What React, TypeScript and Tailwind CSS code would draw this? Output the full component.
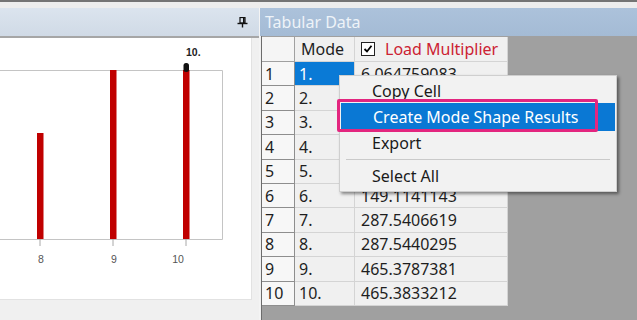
import React from "react";

const rows: [string, string, string][] = [
  ["1", "1.", "6.064759083"],
  ["2", "2.", ""],
  ["3", "3.", ""],
  ["4", "4.", ""],
  ["5", "5.", ""],
  ["6", "6.", "149.1141143"],
  ["7", "7.", "287.5406619"],
  ["8", "8.", "287.5440295"],
  ["9", "9.", "465.3787381"],
  ["10", "10.", "465.3833212"],
];

function Chart() {
  return (
    <svg width="252" height="262" viewBox="0 0 252 262" className="block">
      <path d="M0 32.5 H222.5 V201.5 H0" fill="none" stroke="#c4c4c4" strokeWidth="1" />
      {[40, 113, 186].map((x) => (
        <line key={x} x1={x} y1={201} x2={x} y2={208} stroke="#a8a8a8" strokeWidth="1" />
      ))}
      <rect x="37" y="95" width="6.5" height="106" fill="#c00000" />
      <rect x="110" y="32" width="6.5" height="169" fill="#c00000" />
      <rect x="183" y="32" width="6.5" height="169" fill="#c00000" />
      <rect x="183.5" y="25" width="5.5" height="9" rx="2.5" fill="#111" />
      <text x="186" y="18" fontFamily="Liberation Sans, Arial, sans-serif" fontSize="10.5" fontWeight="bold" fill="#222">10.</text>
      <text x="41" y="225" textAnchor="middle" fontFamily="Liberation Sans, Arial, sans-serif" fontSize="10.5" fill="#555">8</text>
      <text x="114" y="225" textAnchor="middle" fontFamily="Liberation Sans, Arial, sans-serif" fontSize="10.5" fill="#555">9</text>
      <text x="178" y="225" textAnchor="middle" fontFamily="Liberation Sans, Arial, sans-serif" fontSize="10.5" fill="#555">10</text>
    </svg>
  );
}

function Pin() {
  return (
    <svg width="11" height="11" viewBox="0 0 11 11" className="block">
      <rect x="3" y="0.5" width="5" height="5.5" fill="none" stroke="#111" strokeWidth="1.2" />
      <rect x="6" y="1" width="1.6" height="5" fill="#111" />
      <line x1="0.5" y1="6.5" x2="10.5" y2="6.5" stroke="#111" strokeWidth="1.4" />
      <line x1="5.5" y1="6.5" x2="5.5" y2="10.5" stroke="#111" strokeWidth="1.4" />
    </svg>
  );
}

export default function App() {
  return (
    <div
      className="relative w-[637px] h-[320px] overflow-hidden flex flex-col bg-[#f0f0f0]"
      style={{ fontFamily: '"Noto Sans", "Open Sans", sans-serif' }}
    >
      <div className="h-[2px] bg-[#747474]" />
      <div className="h-[6px] bg-[#ededed]" />
      <div className="flex flex-1 min-h-0">
        {/* left panel */}
        <div className="w-[259px] flex flex-col">
          <div className="h-[28px] bg-gradient-to-b from-[#dbe4ee] to-[#d0dae6] flex items-center justify-end pr-[11px]">
            <Pin />
          </div>
          <div className="h-[2px] bg-[#a6a6a6]" />
          <div className="flex flex-1">
            <div className="w-[252px] h-[262px] bg-white border-r border-b border-[#e2e2e2]">
              <Chart />
            </div>
          </div>
        </div>
        <div className="w-[1px] bg-[#f4f4f4]" />
        {/* right panel */}
        <div className="flex-1 flex flex-col">
          <div className="h-[28px] bg-gradient-to-b from-[#acc2db] to-[#a4bbd5] flex items-center pl-[5px] text-[16px] text-[#eef3f8]">
            Tabular Data
          </div>
          <div className="flex flex-1">
            <div className="w-[1px] bg-[#f0f0f0]" />
            <div className="flex-1 bg-[#a0a0a0] border-l border-[#6c6c6c] pt-[1px]">
              <div className="grid grid-cols-[33px_60px_153px] text-[16px] text-[#1e1e1e] leading-none">
                {/* header */}
                <div className="h-[25px] bg-[#f5f5f5] border-r border-b border-[#a0a0a0]" />
                <div className="h-[25px] bg-[#f0f0f0] border-r border-b border-[#d4d4d4] flex items-center pl-[6px]">
                  Mode
                </div>
                <div className="h-[25px] bg-[#f0f0f0] border-r border-b border-[#d4d4d4] flex items-center pl-[6px]">
                  <span className="w-[14px] h-[14px] bg-white border border-[#222] flex items-center justify-center mr-[10px]">
                    <svg width="10" height="10" viewBox="0 0 10 10">
                      <path d="M1.5 5 L4 7.5 L8.5 1.8" fill="none" stroke="#000" strokeWidth="1.8" />
                    </svg>
                  </span>
                  <span className="text-[#cc2233]">Load Multiplier</span>
                </div>
                {rows.map(([n, m, v]) => (
                  <React.Fragment key={n}>
                    <div className="h-[24.4px] bg-[#f7f7f7] border-r border-b border-[#8e8e8e] flex items-center pl-[3px]">
                      {n}
                    </div>
                    <div
                      className={
                        n === "1"
                          ? "h-[24.4px] bg-[#0a7ad6] text-white border-r border-b border-[#d4d4d4] flex items-center pl-[4px]"
                          : "h-[24.4px] bg-[#f0f0f0] border-r border-b border-[#d4d4d4] flex items-center pl-[4px]"
                      }
                    >
                      {m}
                    </div>
                    <div className="h-[24.4px] bg-[#f0f0f0] border-r border-b border-[#d4d4d4] flex items-center pl-[6px]">
                      {v}
                    </div>
                  </React.Fragment>
                ))}
              </div>
            </div>
          </div>
        </div>
      </div>

      {/* context menu */}
      <div className="absolute left-[339px] top-[75px] w-[278px] h-[117px] bg-[#f2f2f2] border border-[#cfcfcf] shadow-[2px_2px_3px_rgba(0,0,0,0.45)] pt-[3px] text-[16px] text-[#1a1a1a] leading-none">
        <div className="h-[24px] flex items-center pl-[32px]">Copy Cell</div>
        <div className="h-[28px] flex items-center pl-[32px] bg-[#0a78d4] text-white mx-[1px]">
          Create Mode Shape Results
        </div>
        <div className="h-[24px] flex items-center pl-[32px]">Export</div>
        <div className="h-[8px] flex items-center px-[6px]">
          <div className="h-[1px] w-full bg-[#cacaca]" />
        </div>
        <div className="h-[25px] flex items-center pl-[32px]">Select All</div>
      </div>
      <div className="absolute left-[337px] top-[99px] w-[261px] h-[33px] border-[3px] border-[#e3267f] rounded-[2px]" />
    </div>
  );
}
